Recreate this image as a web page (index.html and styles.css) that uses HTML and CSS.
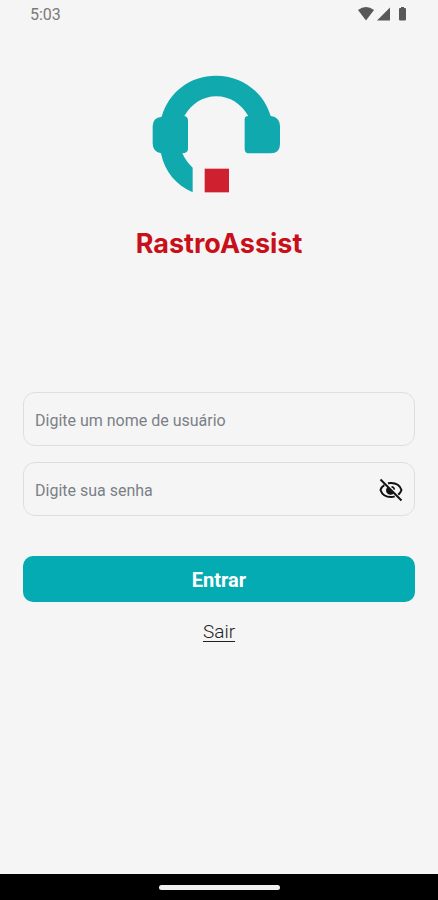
FILE: index.html
```html
<!DOCTYPE html>
<html lang="pt-BR">
<head>
<meta charset="utf-8">
<meta name="viewport" content="width=device-width, initial-scale=1">
<title>RastroAssist</title>
<link rel="stylesheet" href="styles.css">
</head>
<body>
<header class="status">
  <span class="clock">5:03</span>
  <svg class="status-icons" width="50" height="16" viewBox="0 0 50 16" aria-hidden="true">
    <path d="M0 4Q8 -2 16 4L8 14.500Z"/>
    <path d="M32 1.500V14.500H19Z"/>
    <path d="M41 3q0-1 1-1h1V1h3v1h1q1 0 1 1v10.500q0 1-1 1h-5q-1 0-1-1Z"/>
  </svg>
</header>
<main class="login">
  <svg class="logo" width="130" height="118" viewBox="36 30 390 354" role="img" aria-label="Logo RastroAssist">
    <g fill="#10a9ae">
      <path d="M65 155C86 82 149 32 228 32S371 82 392 153Q420 157 420 183V237Q420 265 392 265H328Q314 265 314 251V163Q314 153 325 153C304 117 270 94 229 94S154 117 133 153Q144 155 144 166V252Q144 264 127 265Q138 290 158 308V382C108 360 74 320 63 265Q38 261 38 235V183Q38 158 65 155Z"/>
    </g>
    <path fill="#cf202f" d="M194 311H267V382H194Z"/>
  </svg>
  <h1 class="title">RastroAssist</h1>
  <form class="form">
    <div class="field">
      <input class="input" type="text" aria-label="Nome de usuário" placeholder="Digite um nome de usuário">
    </div>
    <div class="field">
      <input class="input" type="password" aria-label="Senha" placeholder="Digite sua senha">
      <button class="toggle" type="button" aria-label="Mostrar senha">
        <svg width="24" height="24" viewBox="0 0 24 24" fill="none" stroke="#111" stroke-width="2" aria-hidden="true">
          <path d="M1.500 1.500 22.500 22.500"/>
          <path d="M9 5.300Q10.500 5 12 5C17 5 21 7.500 22.500 12Q21.700 14.500 19.300 16.700"/>
          <path d="M5.300 7.200Q2.500 9 1.500 12C3 16.500 7 19 12 19Q14 19 15.700 18.400"/>
          <path fill="#111" stroke="none" d="M8.300 9.300 14.700 15.500A4.200 4.200 0 0 1 8.300 9.300Z"/>
          <path stroke-width="1.500" d="M12.500 8.700Q15 9 15.400 11.600"/>
        </svg>
      </button>
    </div>
    <button class="submit" type="submit">Entrar</button>
  </form>
  <a class="exit" href="#">Sair</a>
</main>
<footer class="navbar"><span class="handle"></span></footer>
</body>
</html>
```
FILE: styles.css
```css
* {
  box-sizing: border-box;
}

body {
  margin: 0;
  min-height: 100vh;
  display: flex;
  flex-direction: column;
  background: #f5f5f5;
  font-family: Roboto, sans-serif;
}

.status {
  display: flex;
  align-items: center;
  justify-content: space-between;
  height: 28px;
  padding: 0 30px;
}

.clock {
  font-size: 16px;
  color: #7a7a7a;
}

.status-icons {
  fill: #585858;
}

.login {
  flex: 1;
  display: flex;
  flex-direction: column;
  align-items: center;
  padding: 47px 23px 24px;
}

.logo {
  margin-right: 4px;
}

.title {
  margin: 35px 0 0;
  font-family: Inter, sans-serif;
  font-size: 27px;
  font-weight: 700;
  line-height: 32px;
  color: #c8101a;
}

.form {
  width: 100%;
  margin-top: 132px;
  display: flex;
  flex-direction: column;
  gap: 16px;
}

.field {
  display: flex;
  align-items: center;
  height: 54px;
  padding: 2px 11px 0;
  border: 1px solid #dcdfe1;
  border-radius: 12px;
}

.input {
  flex: 1;
  min-width: 0;
  padding: 2px 0 0;
  border: 0;
  outline: 0;
  background: transparent;
  font: 16px/24px Roboto, sans-serif;
  color: #222;
}

.input::placeholder {
  color: #7b8087;
  opacity: 1;
}

.toggle {
  display: flex;
  padding: 0;
  border: 0;
  background: none;
}

.submit {
  height: 46px;
  margin-top: 24px;
  padding: 2px 0 0;
  border: 0;
  border-radius: 10px;
  background: #04abb2;
  color: #fff;
  font: 700 20px/24px Roboto, sans-serif;
}

.exit {
  margin-top: 18px;
  font-size: 19px;
  font-weight: 300;
  line-height: 24px;
  color: #222;
  text-underline-offset: 3px;
}

.navbar {
  display: flex;
  align-items: center;
  justify-content: center;
  height: 26px;
  background: #000;
}

.handle {
  width: 121px;
  height: 5px;
  border-radius: 3px;
  background: #f0f0f0;
}
```
